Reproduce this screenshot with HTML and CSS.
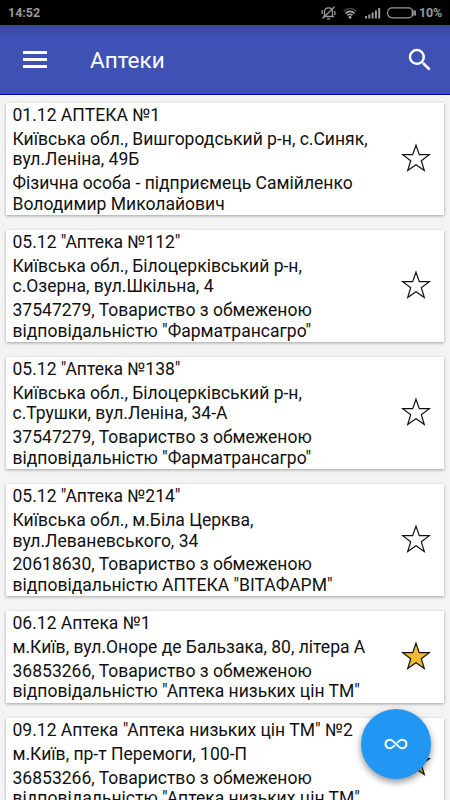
FILE: index.html
```
<!DOCTYPE html>
<html lang="uk">
<head>
    <meta charset="UTF-8">
    <meta name="viewport" content="width=device-width, initial-scale=1.0">
    <title>Аптеки</title>
    <link rel="stylesheet" href="styles.css">
</head>
<body>
    <div class="status-bar">
        <span class="status-time">14:52</span>
        <svg class="icon-bell" width="15" height="14" viewBox="0 0 15 14" fill="none" stroke="#999" stroke-width="1.3">
            <path d="M2 10.500h11M3.500 10V5.500C3.500 3 5.300 1.800 7.500 1.800S11.500 3 11.500 5.500V10M6 12.800h3M13.500.8L1.500 12.500M1.200 4v4M13.800 5v4"/>
        </svg>
        <svg class="icon-wifi" width="14" height="12" viewBox="0 0 14 12" fill="none" stroke-width="1.6">
            <path stroke="#444" d="M.7 4.200C4.500.700 9.500.700 13.300 4.200"/>
            <path stroke="#aaa" d="M2.500 6.300c2.700-2.400 6.300-2.400 9 0M4.500 8.300c1.500-1.300 3.500-1.300 5 0"/>
            <circle cx="7" cy="10.300" r="1.400" fill="#aaa"/>
        </svg>
        <svg class="icon-signal" width="16" height="12" viewBox="0 0 16 12" fill="#999">
            <path d="M0 9h2v2.500H0zM3.300 7.500h2v4h-2zM6.600 5.500h2v6h-2zM9.900 3.500h2v8h-2zM13.200 1h2v10.500h-2z"/>
        </svg>
        <svg class="icon-battery" width="29" height="12" viewBox="0 0 29 12" fill="none" stroke="#999">
            <rect x=".6" y=".8" width="25.500" height="10" rx="4.500" stroke-width="1.200"/>
            <path d="M25.500 3v6M27.600 3.500c.7 1.500.7 3.500 0 5" stroke-width="1.800"/>
        </svg>
        <span class="status-percent">10%</span>
    </div>
    <div class="toolbar">
        <div class="menu-button"><span></span><span></span><span></span></div>
        <h1>Аптеки</h1>
        <svg class="icon-search" width="30" height="30" viewBox="0 0 24 24" fill="#fff">
            <path d="M15.500 14h-.79l-.28-.27A6.471 6.471 0 0 0 16 9.500 6.500 6.500 0 1 0 9.500 16c1.610 0 3.090-.59 4.230-1.570l.27.28v.79l5 4.990L20.490 19l-4.990-5zm-6 0C7.010 14 5 11.990 5 9.500S7.010 5 9.500 5 14 7.010 14 9.500 11.990 14 9.500 14z"/>
        </svg>
    </div>
    <div id="pharmacy-list" class="list"></div>
    <div class="fab">
        <svg width="24" height="12" viewBox="0 0 24 12" fill="none" stroke="#fff" stroke-width="1.9">
            <path d="M10.800 7.200L9 8.900C5.800 11.800 1.500 9.600 1.500 6S5.800.2 9 3.100l6 5.800c3.200 2.900 7.500.7 7.500-2.900S18.200.2 15 3.100l-1.800 1.700"/>
        </svg>
    </div>

    <script>
        const pharmacies = [
            { name: '01.12 АПТЕКА №1', address: 'Київська обл., Вишгородський р-н, с.Синяк,<br>вул.Леніна, 49Б', owner: 'Фізична особа - підприємець Самійленко<br>Володимир Миколайович' },
            { name: '05.12 "Аптека №112"', address: 'Київська обл., Білоцерківський р-н,<br>с.Озерна, вул.Шкільна, 4', owner: '37547279, Товариство з обмеженою<br>відповідальністю "Фарматрансагро"' },
            { name: '05.12 "Аптека №138"', address: 'Київська обл., Білоцерківський р-н,<br>с.Трушки, вул.Леніна, 34-А', owner: '37547279, Товариство з обмеженою<br>відповідальністю "Фарматрансагро"' },
            { name: '05.12 "Аптека №214"', address: 'Київська обл., м.Біла Церква,<br>вул.Леваневського, 34', owner: '20618630, Товариство з обмеженою<br>відповідальністю АПТЕКА "ВІТАФАРМ"' },
            { name: '06.12 Аптека №1', address: 'м.Київ, вул.Оноре де Бальзака, 80, літера А', owner: '36853266, Товариство з обмеженою<br>відповідальністю "Аптека низьких цін ТМ"', favorite: true },
            { name: '09.12 Аптека "Аптека низьких цін ТМ" №2', address: 'м.Київ, пр-т Перемоги, 100-П', owner: '36853266, Товариство з обмеженою<br>відповідальністю "Аптека низьких цін ТМ"', favorite: true }
        ];

        const list = document.getElementById('pharmacy-list');

        pharmacies.forEach(item => {
            const card = document.createElement('div');
            card.className = 'card';
            card.innerHTML = `
                <div class="card-text">
                    <p>${item.name}</p>
                    <p>${item.address}</p>
                    <p>${item.owner}</p>
                </div>
                <svg class="star ${item.favorite ? 'favorite' : ''}" width="32" height="30" viewBox="0 0 32 30">
                    <path d="M16 2.200L19.300 11.700H29.300L21.300 17.800L24.300 27.500L16 21.700L7.700 27.500L10.700 17.800L2.700 11.700H12.700Z"/>
                </svg>
            `;
            list.appendChild(card);
        });
    </script>
</body>
</html>
```
FILE: styles.css
```
* {
    box-sizing: border-box;
}
body {
    margin: 0;
    height: 800px;
    overflow: hidden;
    background-color: #f4f4f4;
    font-family: Roboto, sans-serif;
    color: #111;
}
.status-bar {
    height: 25px;
    padding: 0 8px;
    background-color: #000;
    color: #999;
    display: flex;
    align-items: center;
    font-size: 12.5px;
    font-weight: bold;
}
.status-time {
    margin-right: auto;
}
.icon-bell {
    margin-right: 7px;
}
.icon-wifi {
    margin-right: 8px;
}
.icon-signal {
    margin-right: 6px;
}
.icon-battery {
    margin-right: 3px;
}
.status-percent {
    letter-spacing: -0.2px;
}
.toolbar {
    height: 70px;
    padding: 0 15px 0 23px;
    background: linear-gradient(#39489b, #3f51b5 14px);
    border-bottom: 1px solid #0000a0;
    color: #fff;
    display: flex;
    align-items: center;
}
.menu-button {
    width: 24px;
    display: flex;
    flex-direction: column;
    gap: 4px;
}
.menu-button span {
    height: 3px;
    background-color: #fff;
}
.toolbar h1 {
    flex: 1;
    margin: 1px 0 0 43px;
    font-size: 22.5px;
    font-weight: normal;
}
.list {
    padding: 8px 6px 0;
    display: flex;
    flex-direction: column;
    gap: 15px;
}
.card {
    padding: 2px 12px 1px 6.5px;
    background-color: #fff;
    box-shadow: 0 1px 3px rgba(0, 0, 0, 0.35);
    display: flex;
    align-items: center;
    justify-content: space-between;
}
.card-text {
    display: flex;
    flex-direction: column;
    gap: 3.3px;
    font-size: 17.52px;
    line-height: 20.5px;
    white-space: nowrap;
}
.card-text p {
    margin: 0;
}
.star {
    flex-shrink: 0;
    margin-bottom: 4px;
    fill: none;
    stroke: #111;
    stroke-width: 1.2;
}
.star.favorite {
    fill: #f0bc2b;
}
.fab {
    position: absolute;
    left: 361px;
    top: 709px;
    width: 70px;
    height: 70px;
    border-radius: 50%;
    background-color: #2196f3;
    box-shadow: 0 3px 7px rgba(0, 0, 0, 0.45);
    display: flex;
    align-items: center;
    justify-content: center;
}
```
